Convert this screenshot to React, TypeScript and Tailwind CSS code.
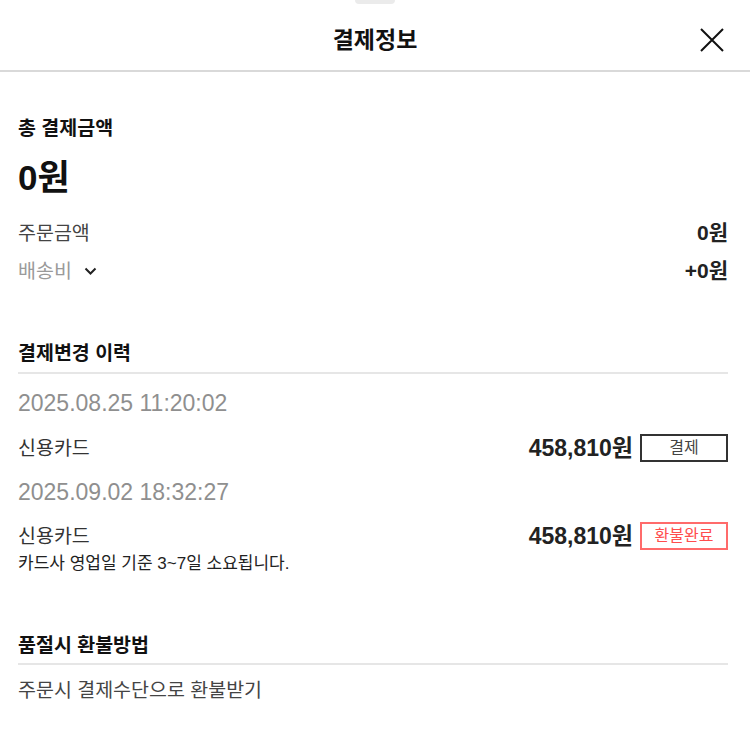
const font = {
  fontFamily: '"Liberation Sans", "Noto Sans CJK KR", sans-serif',
};

function Chevron() {
  return (
    <svg width="13" height="12" viewBox="0 0 13 12" className="ml-[12px]">
      <path d="M1.5 3.5 L6.5 8.5 L11.5 3.5" fill="none" stroke="#222" strokeWidth="2" />
    </svg>
  );
}

function CloseIcon() {
  return (
    <svg width="26" height="26" viewBox="0 0 26 26">
      <path d="M2 2 L24 24 M24 2 L2 24" stroke="#111" strokeWidth="2" fill="none" />
    </svg>
  );
}

function PayRow({
  label,
  amount,
  status,
  refund,
}: {
  label: string;
  amount: string;
  status: string;
  refund?: boolean;
}) {
  return (
    <div className="flex items-center justify-between leading-[30px]">
      <span className="text-[19.5px] text-[#333]">{label}</span>
      <div className="flex items-center gap-[7px]">
        <span className="text-[23px] font-bold text-[#222]">{amount}</span>
        <span
          className={`flex h-[28px] w-[88px] items-center justify-center border-2 text-[16px] leading-none ${
            refund ? "border-[#ff6b6b] text-[#ff4d4d]" : "border-[#333] text-[#444]"
          }`}
        >
          {status}
        </span>
      </div>
    </div>
  );
}

export default function App() {
  return (
    <div className="relative h-[745px] w-[750px] bg-white text-[#111]" style={font}>
      <div className="absolute left-[355px] top-0 h-[4px] w-[40px] rounded-b bg-[#ebebeb]" />
      <div className="relative flex h-[72px] items-center justify-center border-b-2 border-[#d9d9d9] pt-[10px]">
        <h1 className="text-[23px] font-bold">결제정보</h1>
        <button className="absolute right-[25px] top-[27px]">
          <CloseIcon />
        </button>
      </div>

      <div className="pl-[18px] pr-[22px]">
        <h2 className="mt-[43px] text-[19.5px] font-bold leading-[26px]">총 결제금액</h2>
        <p className="mt-[17px] text-[35px] font-bold leading-[40px]">0원</p>
        <div className="mt-[22px] flex items-center justify-between leading-[26px]">
          <span className="text-[19.5px] text-[#444]">주문금액</span>
          <span className="text-[21px] font-bold text-[#222]">0원</span>
        </div>
        <div className="mt-[12px] flex items-center justify-between leading-[26px]">
          <span className="flex items-center text-[19.5px] text-[#9a9a9a]">
            배송비
            <Chevron />
          </span>
          <span className="text-[21px] font-bold text-[#222]">+0원</span>
        </div>

        <h2 className="mt-[56px] border-b-2 border-[#e6e6e6] pb-[6px] text-[19.5px] font-bold leading-[26px]">
          결제변경 이력
        </h2>
        <p className="mt-[14px] text-[23px] leading-[30px] text-[#8f8f8f]">2025.08.25 11:20:02</p>
        <div className="mt-[15px]">
          <PayRow label="신용카드" amount="458,810원" status="결제" />
        </div>
        <p className="mt-[14px] text-[23px] leading-[30px] text-[#8f8f8f]">2025.09.02 18:32:27</p>
        <div className="mt-[14px]">
          <PayRow label="신용카드" amount="458,810원" status="환불완료" refund />
        </div>
        <p className="mt-[2px] text-[17px] leading-[22px] text-[#222]">
          카드사 영업일 기준 3~7일 소요됩니다.
        </p>

        <h2 className="mt-[57px] border-b-2 border-[#e6e6e6] pb-[5px] text-[19.5px] font-bold leading-[26px]">
          품절시 환불방법
        </h2>
        <p className="mt-[12px] text-[19.5px] leading-[26px] text-[#444]">주문시 결제수단으로 환불받기</p>
      </div>
    </div>
  );
}
